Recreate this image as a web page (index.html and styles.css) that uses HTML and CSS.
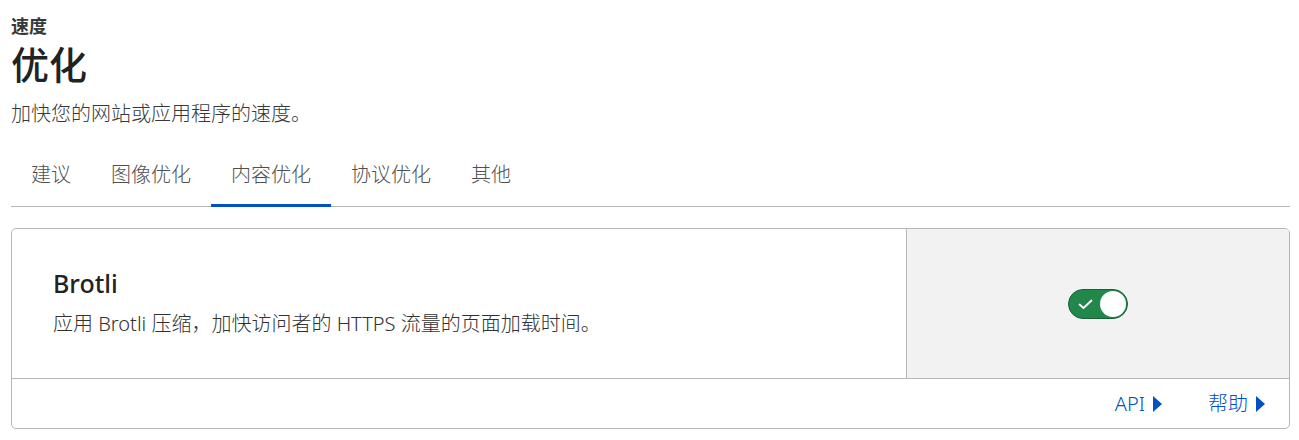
FILE: index.html
```html
<!DOCTYPE html>
<html lang="zh-CN">
<head>
<meta charset="utf-8">
<title>优化</title>
<link rel="stylesheet" href="styles.css">
</head>
<body>
<div class="page">
  <header class="page-head">
    <div class="eyebrow">速度</div>
    <h1 class="title">优化</h1>
    <p class="subtitle">加快您的网站或应用程序的速度。</p>
  </header>
  <nav class="tabs">
    <a class="tab">建议</a>
    <a class="tab">图像优化</a>
    <a class="tab active">内容优化</a>
    <a class="tab">协议优化</a>
    <a class="tab">其他</a>
  </nav>
  <section class="card">
    <div class="card-body">
      <div class="card-info">
        <h2 class="card-title">Brotli</h2>
        <p class="card-desc">应用 Brotli 压缩，加快访问者的 HTTPS 流量的页面加载时间。</p>
      </div>
      <div class="card-control">
        <div class="toggle">
          <svg class="toggle-check" width="15" height="11" viewBox="0 0 15 11"><path d="M1.5 5.5 L5.5 9 L13.5 1.5" fill="none" stroke="#fff" stroke-width="1.8" stroke-linecap="round" stroke-linejoin="round"/></svg>
          <span class="toggle-knob"></span>
        </div>
      </div>
    </div>
    <div class="card-foot">
      <a class="link">API<span class="tri"></span></a>
      <a class="link">帮助<span class="tri"></span></a>
    </div>
  </section>
</div>
</body>
</html>
```
FILE: styles.css
```css
* { box-sizing: border-box; }
html, body { margin: 0; padding: 0; background: #fff; }
body {
  font-family: "Noto Sans", "Noto Sans CJK SC", sans-serif;
  color: #313131;
}
.page { padding: 13px 9px 0 11px; }
.eyebrow {
  font-size: 18px;
  font-weight: 700;
  line-height: 26px;
  color: #36393a;
}
.title {
  margin: 2px 0 0 0;
  font-size: 38px;
  font-weight: 500;
  line-height: 46px;
  color: #222;
}
.subtitle {
  margin: 13px 0 0 0;
  font-size: 20px;
  font-weight: 300;
  line-height: 28px;
  color: #36393a;
}
.tabs {
  margin-top: 18px;
  display: flex;
  border-bottom: 1px solid #b6b6b6;
}
.tab {
  padding: 17px 20px;
  font-size: 20px;
  font-weight: 300;
  line-height: 24px;
  color: #4f4f4f;
  border-bottom: 3px solid transparent;
  margin-bottom: -1px;
  cursor: pointer;
}
.tab.active { border-bottom-color: #0051c3; }
.card {
  margin-top: 21px;
  border: 1px solid #b6b6b6;
  border-radius: 5px;
  overflow: hidden;
}
.card-body {
  display: flex;
  height: 150px;
  border-bottom: 1px solid #b6b6b6;
}
.card-info {
  flex: 1;
  display: flex;
  flex-direction: column;
  justify-content: center;
  padding: 0 0 2px 41px;
}
.card-title {
  margin: 0;
  font-size: 25px;
  font-weight: 500;
  line-height: 32px;
  color: #222;
}
.card-desc {
  margin: 11px 0 0 0;
  font-size: 20px;
  font-weight: 300;
  line-height: 28px;
  color: #313131;
}
.card-control {
  width: 383px;
  background: #f2f2f2;
  border-left: 1px solid #b6b6b6;
  display: flex;
  align-items: center;
  justify-content: center;
}
.toggle {
  position: relative;
  width: 60px;
  height: 30px;
  border-radius: 15px;
  background: #22874a;
  border: 1px solid #1a5e35;
}
.toggle-check {
  position: absolute;
  left: 9px;
  top: 9px;
}
.toggle-knob {
  position: absolute;
  right: 1px;
  top: 1px;
  width: 26px;
  height: 26px;
  border-radius: 50%;
  background: #fff;
}
.card-foot {
  height: 49px;
  display: flex;
  justify-content: flex-end;
  align-items: center;
  gap: 46px;
  padding-right: 24px;
}
.link {
  display: flex;
  align-items: center;
  font-size: 20px;
  font-weight: 300;
  line-height: 26px;
  color: #0051c3;
  cursor: pointer;
}
.tri {
  display: inline-block;
  margin-left: 8px;
  width: 0;
  height: 0;
  border-top: 8px solid transparent;
  border-bottom: 8px solid transparent;
  border-left: 9px solid #0051c3;
}
```
